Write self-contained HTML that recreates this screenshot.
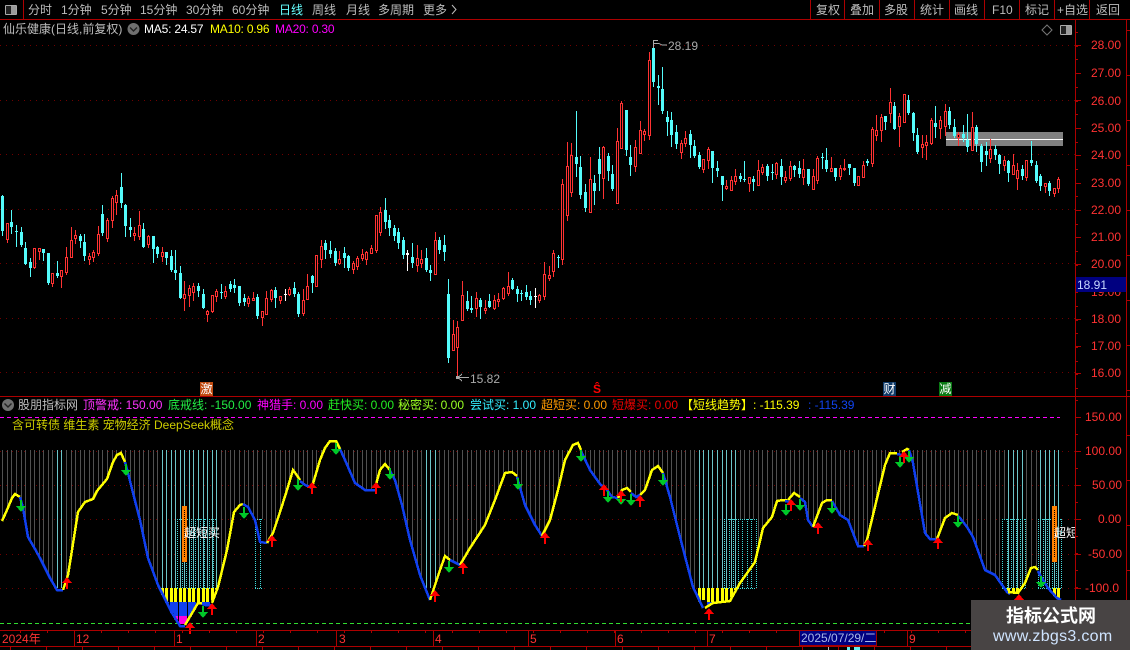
<!DOCTYPE html>
<html><head><meta charset="utf-8"><style>
html,body{margin:0;padding:0;background:#000;width:1130px;height:650px;overflow:hidden}
#r{position:relative;width:1130px;height:650px;overflow:hidden;background:#000}
svg{position:absolute;left:0;top:0}
.t{position:absolute;white-space:pre;font:12px/14px "Liberation Sans","WenQuanYi Zen Hei","Noto Sans CJK SC",sans-serif}
.g{color:#bdbdbd}.a{color:#ff3232}
.m{position:absolute;width:13px;height:14px;top:382px;color:#fff;font:12px/14px "WenQuanYi Zen Hei","Noto Sans CJK SC",sans-serif;text-align:center}
</style></head><body><div id="r">
<svg id="s" width="1130" height="650" shape-rendering="crispEdges"></svg>

<span class="t g" style="left:28px;top:3px">分时</span>
<span class="t g" style="left:61px;top:3px">1分钟</span>
<span class="t g" style="left:101px;top:3px">5分钟</span>
<span class="t g" style="left:140px;top:3px">15分钟</span>
<span class="t g" style="left:186px;top:3px">30分钟</span>
<span class="t g" style="left:232px;top:3px">60分钟</span>
<span class="t" style="left:279px;top:3px;color:#66ffff">日线</span>
<span class="t g" style="left:312px;top:3px">周线</span>
<span class="t g" style="left:346px;top:3px">月线</span>
<span class="t g" style="left:378px;top:3px">多周期</span>
<span class="t g" style="left:423px;top:3px">更多</span>
<span class="t g" style="left:816px;top:3px">复权</span>
<span class="t g" style="left:850px;top:3px">叠加</span>
<span class="t g" style="left:884px;top:3px">多股</span>
<span class="t g" style="left:920px;top:3px">统计</span>
<span class="t g" style="left:954px;top:3px">画线</span>
<span class="t g" style="left:992px;top:3px">F10</span>
<span class="t g" style="left:1025px;top:3px">标记</span>
<span class="t g" style="left:1057px;top:3px">+自选</span>
<span class="t g" style="left:1096px;top:3px">返回</span>

<span class="t g" style="left:3px;top:22px">仙乐健康(日线,前复权)</span>
<span class="t" style="left:144px;top:22px;color:#fff;letter-spacing:-.2px">MA5: 24.57</span>
<span class="t" style="left:210px;top:22px;color:#ffff00;letter-spacing:-.2px">MA10: 0.96</span>
<span class="t" style="left:275px;top:22px;color:#ff00ff;letter-spacing:-.2px">MA20: 0.30</span>

<span class="t" style="left:668px;top:39px;color:#aaa">28.19</span>
<span class="t" style="left:470px;top:372px;color:#aaa">15.82</span>

<span class="m" style="left:200px;background:#c04a10">激</span>
<span class="t" style="left:593px;top:382px;color:#ff0000;font-weight:bold">Ŝ</span>
<span class="m" style="left:883px;background:#0f3a68">财</span>
<span class="m" style="left:939px;background:#0a7a14">减</span>

<span class="t g" style="left:18px;top:398px">股朋指标网</span>
<span class="t" style="left:83px;top:398px;color:#ff33ff">顶警戒: 150.00</span>
<span class="t" style="left:168px;top:398px;color:#22ee44">底戒线: -150.00</span>
<span class="t" style="left:257px;top:398px;color:#ff00ff">神猎手: 0.00</span>
<span class="t" style="left:328px;top:398px;color:#22ee22">赶快买: 0.00</span>
<span class="t" style="left:398px;top:398px;color:#99ff22">秘密买: 0.00</span>
<span class="t" style="left:470px;top:398px;color:#33eeff">尝试买: 1.00</span>
<span class="t" style="left:541px;top:398px;color:#ff9a00">超短买: 0.00</span>
<span class="t" style="left:612px;top:398px;color:#ee0000">短爆买: 0.00</span>
<span class="t" style="left:681px;top:398px;color:#ffff00">【短线趋势】: -115.39</span>
<span class="t" style="left:808px;top:398px;color:#1144ee">: -115.39</span>
<span class="t" style="left:12px;top:418px;color:#cccc00">含可转债 维生素 宠物经济 DeepSeek概念</span>

<span class="t" style="left:184px;top:526px;color:#fff">超短买</span>
<div style="position:absolute;left:1054px;top:526px;width:21px;height:14px;overflow:hidden"><span class="t" style="left:0;top:0;color:#fff">超短买</span></div>

<span class="t a" style="left:1091px;top:38px">28.00</span>
<span class="t a" style="left:1091px;top:66px">27.00</span>
<span class="t a" style="left:1091px;top:94px">26.00</span>
<span class="t a" style="left:1091px;top:121px">25.00</span>
<span class="t a" style="left:1091px;top:148px">24.00</span>
<span class="t a" style="left:1091px;top:176px">23.00</span>
<span class="t a" style="left:1091px;top:203px">22.00</span>
<span class="t a" style="left:1091px;top:230px">21.00</span>
<span class="t a" style="left:1091px;top:257px">20.00</span>
<span class="t a" style="left:1091px;top:285px">19.00</span>
<span class="t a" style="left:1091px;top:312px">18.00</span>
<span class="t a" style="left:1091px;top:339px">17.00</span>
<span class="t a" style="left:1091px;top:366px">16.00</span>
<div style="position:absolute;left:1076px;top:277px;width:50px;height:15px;background:#000080"></div>
<span class="t" style="left:1077px;top:278px;color:#c8d8ff">18.91</span>

<span class="t a" style="left:1085px;top:410px">150.00</span>
<span class="t a" style="left:1085px;top:444px">100.00</span>
<span class="t a" style="left:1092px;top:478px">50.00</span>
<span class="t a" style="left:1098px;top:512px">0.00</span>
<span class="t a" style="left:1088px;top:547px">-50.00</span>
<span class="t a" style="left:1085px;top:581px">-100.0</span>

<span class="t a" style="left:2px;top:632px">2024年</span>
<span class="t a" style="left:76px;top:632px">12</span>
<span class="t a" style="left:176px;top:632px">1</span>
<span class="t a" style="left:258px;top:632px">2</span>
<span class="t a" style="left:339px;top:632px">3</span>
<span class="t a" style="left:435px;top:632px">4</span>
<span class="t a" style="left:530px;top:632px">5</span>
<span class="t a" style="left:617px;top:632px">6</span>
<span class="t a" style="left:709px;top:632px">7</span>
<span class="t a" style="left:909px;top:632px">9</span>
<div style="position:absolute;left:799px;top:630px;width:78px;height:16px;background:#000080;border:1px solid #a00000;box-sizing:border-box"></div>
<span class="t" style="left:801px;top:631px;color:#a8b8e8">2025/07/29/二</span>

<div style="position:absolute;left:971px;top:600px;width:159px;height:50px;background:#484444"></div>
<span class="t" style="left:1006px;top:605px;color:#fff;font:bold 18px/20px 'Noto Sans CJK SC',sans-serif">指标公式网</span>
<span class="t" style="left:993px;top:628px;color:#cfe4ff;font:16px/18px 'Liberation Sans',sans-serif;letter-spacing:.3px">www.zbgs3.com</span>

<script>
var C="c195,196,231,235;r223,223,239,242;c210,222,227,233;c225,231,232,246;c227,232,245,246;c242,248,264,264;c258,262,268,276;r248,248,267,268;r248,248,251,259;c249,249,253,260;c253,253,283,284;r273,273,283,286;c261,273,276,277;r270,270,276,287;r247,257,272,274;r227,240,257,257;r230,235,238,243;c234,236,241,247;c234,242,256,260;r253,256,259,264;r250,252,257,261;r226,234,253,255;c205,214,233,235;r218,220,238,241;r196,198,220,227;r190,195,202,214;c173,187,203,207;c204,205,226,236;c218,227,230,236;r227,233,235,240;r211,225,236,239;c223,229,247,247;r235,236,244,247;c236,236,249,262;c246,247,254,257;r247,252,256,261;c252,252,258,264;c250,256,270,271;c250,270,273,279;c266,273,298,298;r281,294,298,310;r285,288,295,306;r283,286,292,300;c283,286,291,296;c289,294,308,308;r310,311,314,321;r295,295,311,312;r289,291,296,301;c284,292,293,298;r286,291,296,298;c281,284,289,291;c279,285,288,292;c286,286,303,305;c294,298,302,305;r296,298,303,306;r292,298,300,300;c294,297,316,318;r311,311,317,325;r291,298,314,314;r289,290,299,301;c287,290,298,307;r296,296,300,303;w289,294,295,300;r287,289,294,295;c282,288,294,296;c292,294,314,316;r289,300,313,315;r274,286,299,299;c275,276,283,292;r255,255,286,286;r240,246,259,267;c240,243,250,258;c241,250,254,257;c248,251,263,265;r251,259,263,264;c247,253,258,267;c255,256,268,270;r261,263,269,273;r256,258,266,269;r249,254,258,260;r251,252,259,264;r245,248,253,253;r215,215,250,252;r207,212,232,235;c198,210,222,228;c215,220,228,235;c225,228,236,240;c228,232,243,248;c237,240,255,258;w250,253,255,270;c243,257,263,267;r245,258,265,271;r250,259,263,267;c248,258,270,271;c265,270,273,280;r232,240,274,274;c237,240,250,253;c235,245,252,260;c279,294,358,362;r320,334,350,350;r321,327,347,376;r281,295,320,320;c291,301,309,310;c296,308,310,312;r292,298,308,316;c298,300,307,318;r300,308,310,313;c294,301,307,307;r295,300,308,309;r293,299,301,306;r287,288,298,299;r272,286,293,295;c278,280,289,289;c286,289,294,301;c290,293,294,300;c285,292,297,299;c291,296,300,304;w288,296,297,307;r294,295,300,302;r262,274,296,299;r266,275,278,280;r250,253,271,276;c255,257,258,267;r179,184,259,264;r142,166,215,220;r143,155,192,196;c111,157,164,176;c156,167,195,198;c184,192,208,211;r157,179,212,212;c175,183,191,204;c147,159,174,190;r146,147,178,198;c153,156,171,180;c165,174,189,190;r128,141,203,203;r101,103,148,148;c110,110,150,155;c145,157,165,175;r140,147,166,171;r121,130,153,153;r129,131,134,140;r52,60,135,139;c48,48,82,86;c75,86,88,104;c67,89,111,113;c111,117,122,135;c112,120,135,146;c125,132,144,148;r140,143,152,158;r131,138,143,146;c130,134,145,157;c140,146,156,157;c152,155,167,168;r159,159,169,172;r147,149,160,168;c151,151,168,182;c161,168,171,176;c176,176,185,200;r180,186,188,189;r176,180,190,190;r169,176,181,184;c173,176,179,181;c161,179,180,181;r177,177,183,191;c176,179,182,190;r160,170,185,185;r164,167,172,174;c164,166,176,180;c164,172,173,179;r162,163,174,178;c159,166,177,184;r171,177,180,182;r161,166,178,180;c165,166,170,176;c161,168,174,177;r159,169,177,184;c169,169,184,185;r169,176,189,189;r156,158,180,183;c153,157,158,168;c148,160,169,171;r157,168,171,171;c168,168,177,180;r165,168,176,179;r159,168,169,170;c164,164,168,174;c168,168,183,185;r176,176,185,185;r161,165,177,177;c159,161,163,165;r127,129,163,166;r115,130,135,140;r114,117,130,141;c116,116,122,129;r88,102,113,122;c102,106,129,129;r113,116,126,146;r94,94,122,122;c95,100,113,114;c112,113,133,140;c128,135,152,153;r135,144,147,157;r135,142,145,159;r118,120,143,144;c106,123,127,137;r116,120,128,138;r104,111,126,135;c107,111,125,128;c119,127,136,137;r132,134,137,145;c125,134,138,141;c114,140,147,151;r112,127,150,150;c125,127,144,151;c144,146,162,171;c142,151,155,165;r139,149,158,162;c145,149,155,159;c154,155,164,173;r156,160,165,170;c160,161,173,181;r154,165,174,174;r163,170,178,189;c165,169,176,179;r160,160,177,180;c141,160,163,165;c161,165,181,182;c174,176,186,190;r183,183,186,192;c181,183,191,195;r188,188,193,196;r177,179,188,192";
var Y="#ffff00",B="#1040f0";
var S=[[Y,[[2,521],[7,510],[12,498],[15,494],[20,497]]],[B,[[20,497],[23,508],[28,537],[35,549],[40,558],[50,578],[57,590],[63,590]]],[Y,[[63,590],[68,575],[72,550],[78,512],[85,502],[93,499],[97,491],[107,479],[113,462],[117,455],[121,453],[125,462]]],[B,[[125,462],[128,473],[133,493],[140,520],[148,558],[158,585],[172,613],[180,626],[185,626]]],[Y,[[185,625],[198,603],[202,603]]],[B,[[202,604],[205,605],[212,605]]],[Y,[[212,603],[218,587],[227,550],[234,512],[240,505],[243,504]]],[B,[[243,504],[248,507],[255,520],[260,542],[267,543]]],[Y,[[267,543],[273,533],[280,512],[287,490],[293,470],[296,474],[300,480]]],[B,[[300,481],[305,485],[312,488]]],[Y,[[312,487],[320,460],[325,448],[330,441],[336,441],[340,449]]],[B,[[340,449],[345,460],[355,483],[365,490],[375,490]]],[Y,[[375,488],[380,470],[385,464],[390,470]]],[B,[[390,471],[395,480],[402,505],[410,540],[420,575],[430,600]]],[Y,[[430,600],[440,570],[445,556],[450,560]]],[B,[[450,560],[460,565]]],[Y,[[460,565],[470,548],[485,525],[495,500],[505,473],[512,472],[517,476]]],[B,[[517,477],[525,505],[535,525],[542,536]]],[Y,[[542,536],[550,520],[558,490],[565,460],[573,445],[578,443],[581,450]]],[B,[[581,451],[590,470],[600,484],[607,490],[612,497],[618,498]]],[Y,[[618,498],[622,490],[627,488],[631,492]]],[B,[[631,493],[636,497],[640,495]]],[Y,[[640,495],[645,490],[652,470],[658,466],[663,473]]],[B,[[663,473],[670,497],[680,537],[693,587],[703,608]]],[Y,[[705,608],[713,603],[730,601],[740,583],[755,562],[763,528],[772,517],[777,501],[783,500],[787,500]]],[B,[[785,501],[790,502]]],[Y,[[788,500],[794,493],[800,497]]],[B,[[800,498],[805,502],[808,520],[813,527]]],[Y,[[813,527],[822,503],[827,500],[832,500]]],[B,[[832,501],[840,515],[848,520],[858,546],[864,546]]],[Y,[[864,546],[867,540],[885,465],[890,453],[897,453]]],[B,[[897,454],[902,455]]],[Y,[[902,452],[907,449],[909,450]]],[B,[[909,450],[913,463],[925,533],[930,539],[937,539]]],[Y,[[937,539],[945,518],[952,513],[958,515]]],[B,[[958,516],[960,518],[967,527],[973,537],[985,570],[995,575],[1007,592],[1010,594]]],[Y,[[1008,592],[1018,593],[1025,583],[1031,568],[1035,567],[1038,570]]],[B,[[1038,571],[1040,575],[1048,588],[1057,598],[1061,600]]]];
var GA=[[21,512],[126,476],[244,519],[298,491],[336,455],[390,480],[449,573],[518,490],[581,462],[608,503],[621,505],[631,506],[663,486],[786,516],[800,511],[832,514],[900,468],[909,463],[203,618],[1041,588],[958,528]];
var RA=[[212,603],[190,622],[272,535],[67,577],[312,482],[376,482],[435,590],[463,562],[545,532],[604,484],[621,490],[640,495],[709,608],[791,499],[818,522],[868,539],[904,451],[938,537],[1019,594]];
var h=[];
function R(x,y,w,H,f){if(H>0&&w>0)h.push('<rect x="'+x+'" y="'+y+'" width="'+w+'" height="'+H+'" fill="'+f+'"/>')}
function L(d,c,w,e){h.push('<path d="'+d+'" fill="none" stroke="'+c+'" stroke-width="'+(w||1)+'"'+(e?' stroke-dasharray="'+e+'"':'')+'/>')}
function Cy(x){for(var i=0;i<S.length;i++){var p=S[i][1];for(var j=0;j<p.length-1;j++){if(x>=p[j][0]&&x<=p[j+1][0]&&p[j+1][0]>p[j][0]){return p[j][1]+(p[j+1][1]-p[j][1])*(x-p[j][0])/(p[j+1][0]-p[j][0])}}}return x<2?521:600}
function inR(x,a){for(var i=0;i<a.length;i++)if(x>=a[i][0]&&x<=a[i][1])return true;return false}
var RED="#ad0000",DOT="#700000",d="1 5";
/* price grid */
[45,100,154,209,263,318,372].forEach(function(y){L("M0 "+(y+.5)+"H1075",DOT,1,d)});
/* grey zone */
R(946,132,117,14,"#808080");R(946,139,117,1,"#ffffff");
/* candles */
C.split(";").forEach(function(s,i){var t=s[0],v=s.slice(1).split(",").map(Number),x=Math.round(2.3+4.552*i);
 var col=t=="c"?"#54fcfc":t=="w"?"#ffffff":"#ff3232";
 R(x,v[0],1,v[3]-v[0]+1,col);
 if(t=="r"){var H=v[2]-v[1];h.push('<rect x="'+(x-.5)+'" y="'+(v[1]+.5)+'" width="2" height="'+H+'" fill="#000" stroke="'+col+'"/>')}
 else R(x-1,v[1],3,Math.max(v[2]-v[1],1),col)});
/* marks near extremes */
L("M653.5 48V40.5H658M654 43.5H659L662 45H667","#aaa");
L("M457 377.5H469M458 377.5L462 374M458 377.5L462 381","#aaa");R(456,376,3,3,"#aaa");
/* lower panel grid */
L("M0 417.5H1060","#ff00ff",1,"4 3");
[451,485,519,554,588].forEach(function(y){L("M0 "+(y+.5)+"H1075",DOT,1,d)});
L("M0 623.5H1075","#30dd30",1,"4 3");
/* stripes */
var cyan=[[56,62],[160,218],[424,438],[698,735],[1006,1024],[1040,1060]];
var z=[[177,217],[255,263],[724,756],[1002,1025],[1038,1062]];
for(var i=0;i<=232;i++){var x=Math.round(2.3+4.552*i),c=Cy(x+.5),lit=inR(x,cyan),zn=inR(x,z);
 var end=lit?Math.min(c,588):(zn?Math.min(c,519):c);
 if(end>450)R(x,450,1,end-450,lit?"#6cc4c8":"#505050")}
/* dotted zones */
z.forEach(function(a){L("M"+a[0]+" 519.5H"+a[1],"#40d8d8",1,"1 1");L("M"+a[0]+" 588.5H"+a[1],"#40d8d8",1,"1 1");
 for(var q=a[0];q<=a[1];q+=4.55){var X=Math.round(q)+.5;L("M"+X+" 519V589","#40d8d8",1,"1 1")}});
/* bars */
var yb=[[160,216],[698,735],[1007,1022],[1050,1061]];
for(var i=0;i<=232;i++){var x=Math.round(2.3+4.552*i);if(!inR(x,yb))continue;var c=Cy(x+1);
 if(c>588){R(x-1,588,3,Math.min(c,602)-588,Y);
  if(c>602){R(x-1,602,4,Math.min(c,616)-602,B);
   if(c>616)R(x-1,616,4,Math.min(c,624)-616,"#ff00e0")}}}
/* orange bars */
[182,1052].forEach(function(x){R(x,506,5,56,"#ff8000");L("M"+(x+2.5)+" 510V558","#000",1,"1 1")});
/* curve */
S.forEach(function(a){h.push('<polyline points="'+a[1].map(function(p){return p.join(",")}).join(" ")+'" fill="none" stroke="'+a[0]+'" stroke-width="2.5"/>')});
/* arrows */
GA.forEach(function(a){var x=a[0],y=a[1];R(x-1,y-12,2,7,"#00c828");h.push('<polygon points="'+(x-5)+','+(y-6)+' '+(x+5)+','+(y-6)+' '+x+','+y+'" fill="#00c828"/>')});
RA.forEach(function(a){var x=a[0],y=a[1];R(x-1,y+6,2,6,"#ff0000");h.push('<polygon points="'+(x-5)+','+(y+6)+' '+(x+5)+','+(y+6)+' '+x+','+y+'" fill="#ff0000"/>')});
/* frame */
R(0,19,1130,1,RED);R(0,396,1075,1,RED);R(1075,396,55,1,RED);R(1075,20,1,610,RED);R(1126,20,1,580,RED);
R(23,0,1,19,RED);
[810,844,879,914,949,984,1019,1054,1089].forEach(function(x){R(x,0,1,19,RED)});
R(0,630,1075,1,RED);R(0,646,971,1,RED);
[74,174,256,336,433,528,615,707,907].forEach(function(x){R(x,630,1,16,RED)});
for(var x=20;x<1075;x+=27)R(x,630,1,3,RED);
for(var x=10;x<971;x+=36)R(x,646,1,4,RED);
/* axis ticks */
[45,73,100,128,155,183,210,237,264,291,319,346,373,417,451,485,519,554,588].forEach(function(y){R(1075,y,6,1,RED)});
for(var y=32;y<396;y+=13.7)R(1075,Math.round(y),3,1,RED);
for(var y=400;y<630;y+=17)R(1075,Math.round(y),3,1,RED);
for(var y=30;y<600;y+=45)R(1126,y,4,1,RED);
/* icons */
h.push('<rect x="5.5" y="5.5" width="11" height="9" rx="1" fill="#222" stroke="#aaa"/>');R(11,6,5,8,"#9a9a9a");
h.push('<rect x="1060.5" y="25.5" width="11" height="9" rx="1" fill="#222" stroke="#aaa"/>');R(1066,26,5,8,"#9a9a9a");
h.push('<g shape-rendering="auto"><circle cx="133.5" cy="29" r="6" fill="#707070"/><path d="M130 27.5l3.5 3.5 3.5-3.5" fill="none" stroke="#222" stroke-width="1.4"/><circle cx="8" cy="405" r="6" fill="#707070"/><path d="M4.5 403.5l3.5 3.5 3.5-3.5" fill="none" stroke="#222" stroke-width="1.4"/><path d="M1047 25l5 5-5 5-5-5z" fill="none" stroke="#777"/><path d="M452 5l4 4.5-4 4.5" fill="none" stroke="#bdbdbd"/></g>');
/* footer specks */
R(828,647,1,3,"#bbb");R(847,647,3,3,"#6ee");R(854,647,6,3,"#6ee");
document.getElementById("s").innerHTML=h.join("");
</script>
</div></body></html>
